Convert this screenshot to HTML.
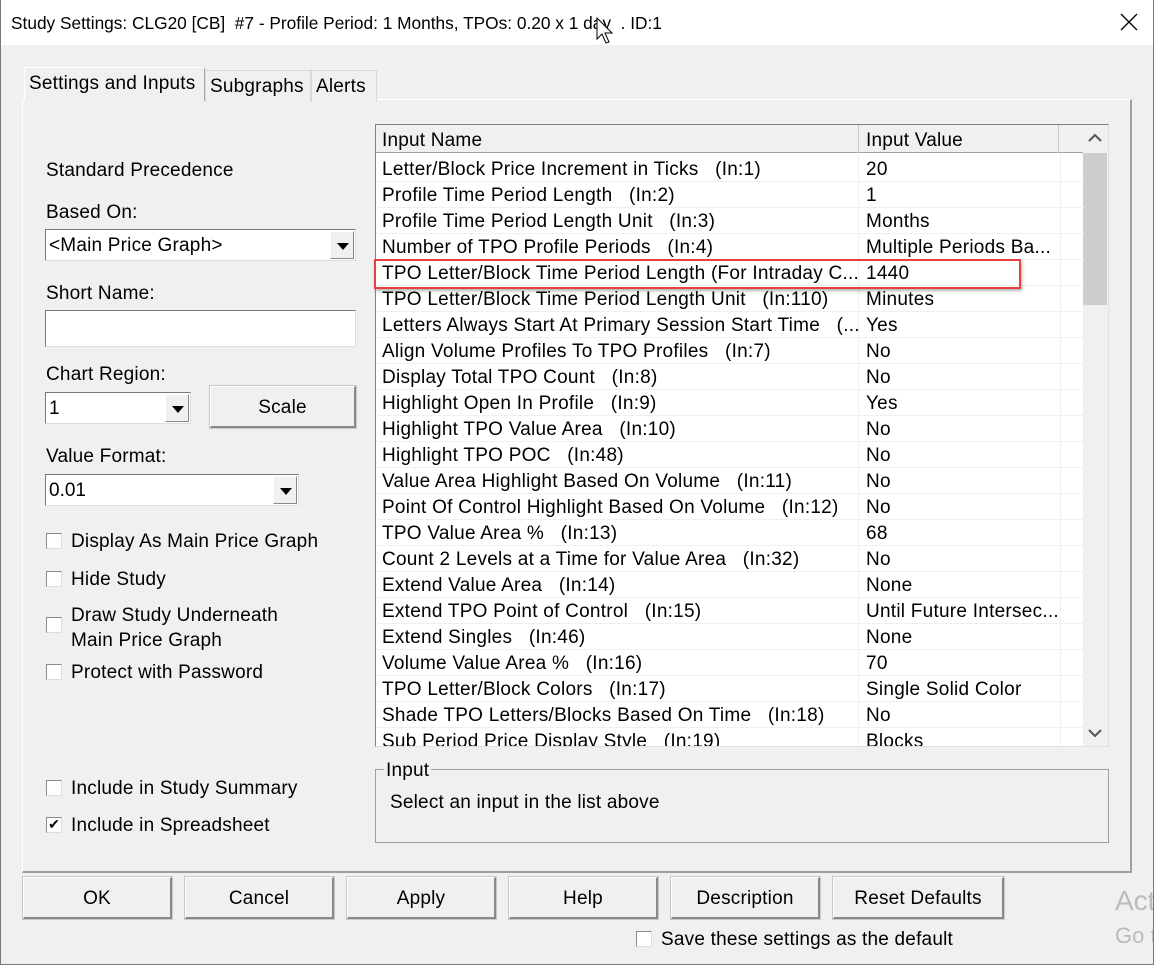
<!DOCTYPE html>
<html><head><meta charset="utf-8"><style>
*{box-sizing:border-box;margin:0;padding:0}
body{width:1154px;height:965px;background:#f0f0f0;font-family:"Liberation Sans",Arial,sans-serif;font-size:19px;color:#000;position:relative;overflow:hidden}
.a{position:absolute;white-space:nowrap}
.title{left:0;top:0;width:1154px;height:45px;background:#fff}
.win{left:0;top:0;width:1154px;height:965px;border:1px solid #777;border-top:none}
.tab{border:1px solid #d8d8d8;border-bottom:none;background:#f0f0f0;height:32px;padding:5px 4px 0;font-size:19px}
.panel{left:22px;top:99px;width:1110px;height:774px;border:1px solid #fff;border-right:2px solid #a0a0a0;border-bottom:2px solid #a0a0a0}
.combo{background:#fff;border:1px solid #7a7a7a;border-right-color:#ddd;border-bottom-color:#ddd;height:32px;padding:5px 3px}
.arr{position:absolute;right:1px;top:1px;bottom:1px;width:24px;background:#f0f0f0;border:1px solid #fff;border-right-color:#888;border-bottom-color:#888}
.arr:after{content:"";position:absolute;left:6px;top:11px;border-left:6px solid transparent;border-right:6px solid transparent;border-top:7px solid #000}
.btn{background:#f0f0f0;border:1px solid #fff;border-right:2px solid #8a8a8a;border-bottom:2px solid #8a8a8a;outline:1px solid #c8c8c8;text-align:center;line-height:41px;height:42px}
.cb{width:16px;height:16px;background:#fff;border:1px solid #8a8a8a;border-right-color:#ddd;border-bottom-color:#ddd}
.tbl{left:375px;top:124px;width:734px;height:623px;background:#fff;border:1px solid #808080;border-right-color:#e0e0e0;border-bottom-color:#e0e0e0;overflow:hidden}
.row{position:absolute;left:0;width:708px;height:26px;border-bottom:1px solid #f0f0f0;line-height:26px;letter-spacing:0.25px}
.row span{position:absolute;left:6px;top:1px}
.row b{font-weight:normal;position:absolute;left:490px;top:1px}
.l{letter-spacing:0.2px}
</style></head><body>
<div class="a title"></div>
<div class="a" style="left:11px;top:13px;font-size:17.3px">Study Settings: CLG20 [CB] &nbsp;#7 - Profile Period: 1 Months, TPOs: 0.20 x 1 day &nbsp;. ID:1</div>
<svg class="a" style="left:596px;top:17px" width="20" height="30"><path d="M1 1 L1 22 L6 17 L10 26 L13 25 L9 16 L16 16 Z" fill="#fff" stroke="#000" stroke-width="1"/></svg>
<svg class="a" style="left:1120px;top:13px" width="18" height="18"><path d="M1 1L17 17M17 1L1 17" stroke="#000" stroke-width="1.3"/></svg>

<div class="a panel"></div>
<div class="a tab l" style="left:24px;top:67px;width:181px;height:34px;border-color:#fff;border-right-color:#aaa;z-index:2">Settings and Inputs</div>
<div class="a tab l" style="left:205px;top:70px;width:106px">Subgraphs</div>
<div class="a tab l" style="left:311px;top:70px;width:66px">Alerts</div>

<div class="a l" style="left:46px;top:160px">Standard Precedence</div>
<div class="a l" style="left:46px;top:202px">Based On:</div>
<div class="a combo l" style="left:45px;top:229px;width:311px">&lt;Main Price Graph&gt;<div class="arr"></div></div>
<div class="a l" style="left:46px;top:283px">Short Name:</div>
<div class="a combo" style="left:45px;top:310px;width:311px;height:37px"></div>
<div class="a l" style="left:46px;top:364px">Chart Region:</div>
<div class="a combo" style="left:45px;top:392px;width:146px">1<div class="arr"></div></div>
<div class="a btn l" style="left:210px;top:386px;width:146px;height:42px">Scale</div>
<div class="a l" style="left:46px;top:446px">Value Format:</div>
<div class="a combo" style="left:45px;top:474px;width:254px">0.01<div class="arr"></div></div>

<div class="a cb" style="left:46px;top:533px"></div><div class="a l" style="left:71px;top:531px">Display As Main Price Graph</div>
<div class="a cb" style="left:46px;top:571px"></div><div class="a l" style="left:71px;top:569px">Hide Study</div>
<div class="a cb" style="left:46px;top:617px"></div><div class="a l" style="left:71px;top:603px;line-height:25px">Draw Study Underneath<br>Main Price Graph</div>
<div class="a cb" style="left:46px;top:664px"></div><div class="a l" style="left:71px;top:662px">Protect with Password</div>
<div class="a cb" style="left:46px;top:780px"></div><div class="a l" style="left:71px;top:778px">Include in Study Summary</div>
<div class="a cb" style="left:46px;top:817px;font-size:14px;line-height:13px;text-align:center">✔</div><div class="a l" style="left:71px;top:815px">Include in Spreadsheet</div>

<div class="a tbl">
<div class="a" style="left:0;top:0;width:707px;height:28px;background:#f0f0f0;border-bottom:1px solid #a0a0a0"></div>
<div class="a l" style="left:6px;top:5px">Input Name</div>
<div class="a" style="left:482px;top:0;width:1px;height:28px;background:#c8c8c8"></div>
<div class="a l" style="left:490px;top:5px">Input Value</div>
<div class="a" style="left:682px;top:0;width:1px;height:28px;background:#c8c8c8"></div>
<div class="a" style="left:482px;top:28px;width:1px;height:600px;background:#f0f0f0"></div>
<div class="a" style="left:684px;top:28px;width:1px;height:600px;background:#f0f0f0"></div>
<div class="a" style="left:707px;top:0;width:27px;height:623px;background:#f0f0f0"></div>
<div class="a" style="left:707px;top:28px;width:24px;height:152px;background:#cdcdcd"></div>
<svg class="a" style="left:712px;top:8px" width="14" height="10"><path d="M1 8L7 2L13 8" stroke="#555" stroke-width="2" fill="none"/></svg>
<svg class="a" style="left:712px;top:603px" width="14" height="10"><path d="M1 2L7 8L13 2" stroke="#555" stroke-width="2" fill="none"/></svg>
<div class="row" style="top:31px"><span>Letter/Block Price Increment in Ticks &nbsp;&nbsp;(In:1)</span><b>20</b></div>
<div class="row" style="top:57px"><span>Profile Time Period Length &nbsp;&nbsp;(In:2)</span><b>1</b></div>
<div class="row" style="top:83px"><span>Profile Time Period Length Unit &nbsp;&nbsp;(In:3)</span><b>Months</b></div>
<div class="row" style="top:109px"><span>Number of TPO Profile Periods &nbsp;&nbsp;(In:4)</span><b>Multiple Periods Ba...</b></div>
<div class="row" style="top:135px"><span>TPO Letter/Block Time Period Length (For Intraday C...</span><b>1440</b></div>
<div class="row" style="top:161px"><span>TPO Letter/Block Time Period Length Unit &nbsp;&nbsp;(In:110)</span><b>Minutes</b></div>
<div class="row" style="top:187px"><span>Letters Always Start At Primary Session Start Time &nbsp;&nbsp;(...</span><b>Yes</b></div>
<div class="row" style="top:213px"><span>Align Volume Profiles To TPO Profiles &nbsp;&nbsp;(In:7)</span><b>No</b></div>
<div class="row" style="top:239px"><span>Display Total TPO Count &nbsp;&nbsp;(In:8)</span><b>No</b></div>
<div class="row" style="top:265px"><span>Highlight Open In Profile &nbsp;&nbsp;(In:9)</span><b>Yes</b></div>
<div class="row" style="top:291px"><span>Highlight TPO Value Area &nbsp;&nbsp;(In:10)</span><b>No</b></div>
<div class="row" style="top:317px"><span>Highlight TPO POC &nbsp;&nbsp;(In:48)</span><b>No</b></div>
<div class="row" style="top:343px"><span>Value Area Highlight Based On Volume &nbsp;&nbsp;(In:11)</span><b>No</b></div>
<div class="row" style="top:369px"><span>Point Of Control Highlight Based On Volume &nbsp;&nbsp;(In:12)</span><b>No</b></div>
<div class="row" style="top:395px"><span>TPO Value Area % &nbsp;&nbsp;(In:13)</span><b>68</b></div>
<div class="row" style="top:421px"><span>Count 2 Levels at a Time for Value Area &nbsp;&nbsp;(In:32)</span><b>No</b></div>
<div class="row" style="top:447px"><span>Extend Value Area &nbsp;&nbsp;(In:14)</span><b>None</b></div>
<div class="row" style="top:473px"><span>Extend TPO Point of Control &nbsp;&nbsp;(In:15)</span><b>Until Future Intersec...</b></div>
<div class="row" style="top:499px"><span>Extend Singles &nbsp;&nbsp;(In:46)</span><b>None</b></div>
<div class="row" style="top:525px"><span>Volume Value Area % &nbsp;&nbsp;(In:16)</span><b>70</b></div>
<div class="row" style="top:551px"><span>TPO Letter/Block Colors &nbsp;&nbsp;(In:17)</span><b>Single Solid Color</b></div>
<div class="row" style="top:577px"><span>Shade TPO Letters/Blocks Based On Time &nbsp;&nbsp;(In:18)</span><b>No</b></div>
<div class="row" style="top:603px"><span>Sub Period Price Display Style &nbsp;&nbsp;(In:19)</span><b>Blocks</b></div>
</div>
<div class="a" style="left:374px;top:259px;width:647px;height:30px;border:2px solid #e8403f;box-shadow:1px 2px 3px rgba(0,0,0,.3)"></div>

<div class="a" style="left:375px;top:769px;width:734px;height:74px;border:1px solid #a0a0a0"></div>
<div class="a l" style="left:384px;top:760px;background:#f0f0f0;padding:0 2px">Input</div>
<div class="a l" style="left:390px;top:792px">Select an input in the list above</div>

<div class="a btn l" style="left:23px;top:877px;width:149px">OK</div>
<div class="a btn l" style="left:185px;top:877px;width:149px">Cancel</div>
<div class="a btn l" style="left:347px;top:877px;width:149px">Apply</div>
<div class="a btn l" style="left:509px;top:877px;width:149px">Help</div>
<div class="a btn l" style="left:671px;top:877px;width:149px">Description</div>
<div class="a btn l" style="left:833px;top:877px;width:171px">Reset Defaults</div>
<div class="a cb" style="left:636px;top:931px"></div><div class="a l" style="left:661px;top:929px">Save these settings as the default</div>
<div class="a" style="left:1115px;top:885px;font-size:28px;color:#bbb">Act</div>
<div class="a" style="left:1115px;top:923px;font-size:22px;color:#bbb">Go t</div>
<div class="a win"></div>
</body></html>
